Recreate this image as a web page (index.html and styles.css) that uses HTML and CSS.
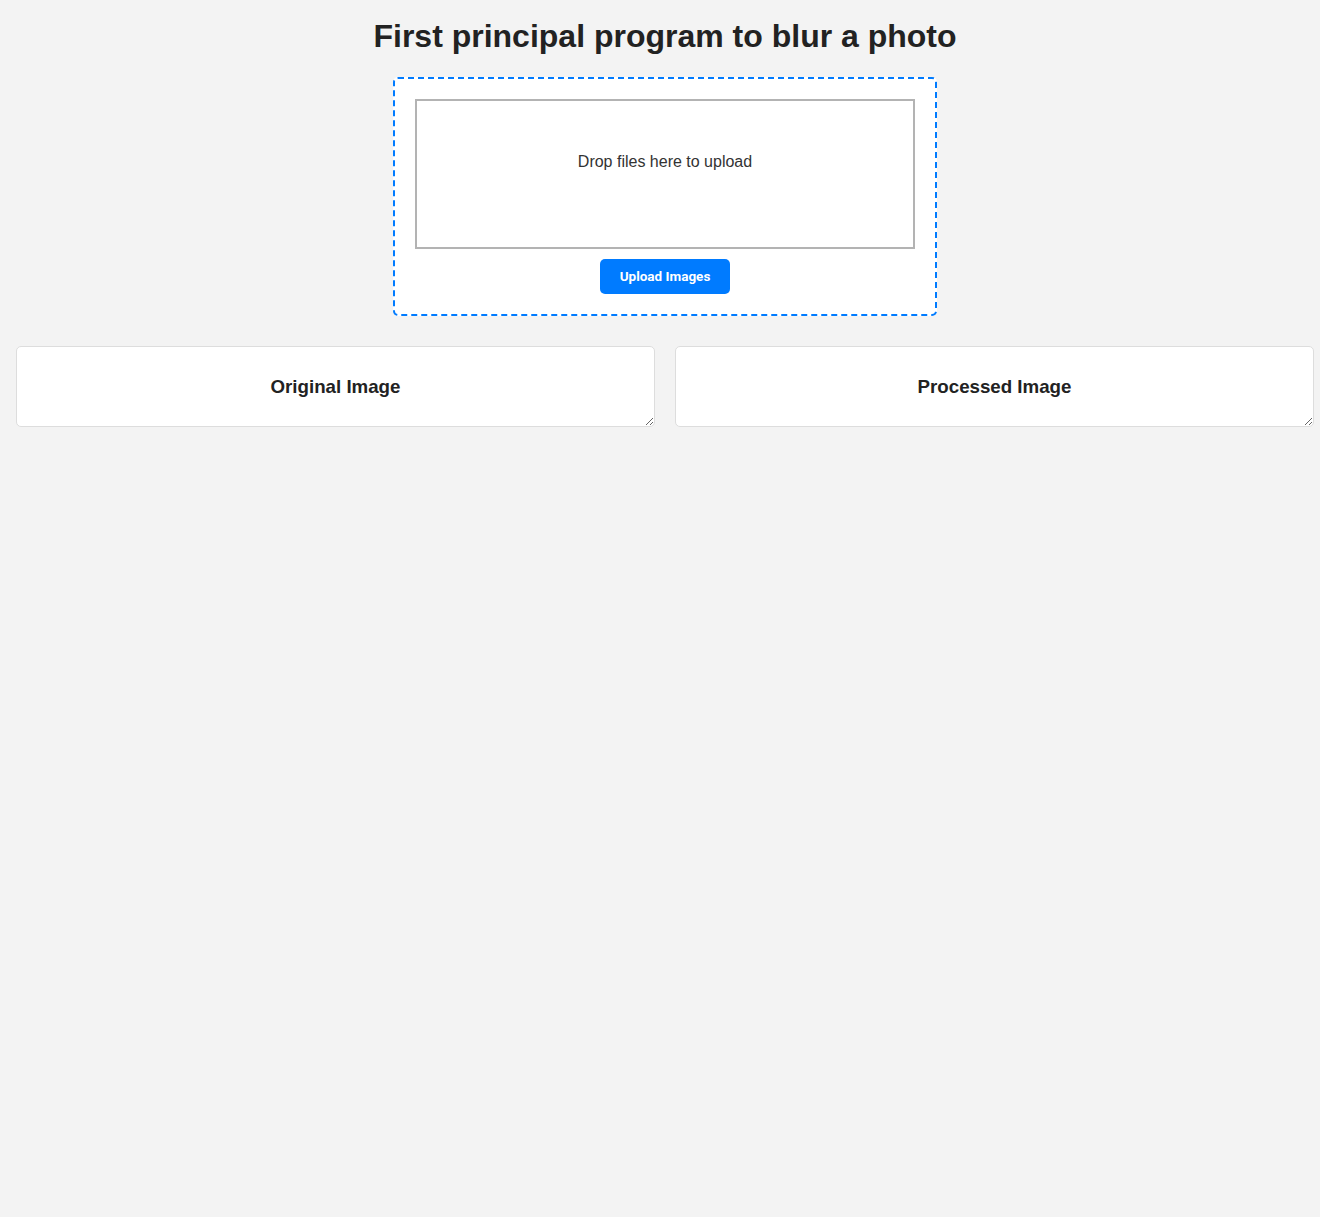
FILE: index.html
```html
<!DOCTYPE html>
<html lang="en">
<head>
<meta charset="utf-8">
<title>Blur a photo</title>
<link rel="stylesheet" href="styles.css">
</head>
<body>
<h1 class="title">First principal program to blur a photo</h1>
<div class="upload-wrap">
  <form class="upload-box">
    <div class="dropzone">
      <div class="dz-message">Drop files here to upload</div>
    </div>
    <button type="button" class="upload-btn">Upload Images</button>
  </form>
</div>
<div class="panels">
  <div class="panel"><h3 class="panel-title">Original Image</h3></div>
  <div class="panel"><h3 class="panel-title">Processed Image</h3></div>
</div>
</body>
</html>
```
FILE: styles.css
```css
html, body {
  margin: 0;
  padding: 0;
  background: #f3f3f3;
}
body {
  font-family: "Liberation Sans", Arial, sans-serif;
  color: #222;
  padding: 1px 6px 0 16px;
}
.title {
  margin: 17px 0 22px;
  font-size: 32px;
  font-weight: bold;
  text-align: center;
  line-height: 37px;
  color: #222;
}
.upload-wrap {
  display: flex;
  justify-content: center;
}
.upload-box {
  width: 500px;
  padding: 20px;
  background: #fff;
  border: 2px dashed #007bff;
  border-radius: 5px;
  display: flex;
  flex-direction: column;
  align-items: center;
  margin: 0;
}
.dropzone {
  box-sizing: border-box;
  width: 500px;
  height: 150px;
  border: 2px solid #b3b3b3;
  background: #fff;
  padding-top: 52px;
  text-align: center;
}
.dz-message {
  font-size: 16px;
  line-height: 18px;
  color: #333;
}
.upload-btn {
  margin-top: 10px;
  width: 130px;
  height: 35px;
  border: none;
  border-radius: 5px;
  background: #007bff;
  color: #fff;
  font-family: Roboto, "Liberation Sans", sans-serif;
  font-weight: 700;
  font-size: 13.5px;
  padding: 0 0 1px;
}
.panels {
  display: flex;
  gap: 20px;
  margin: 30px 0 0;
}
.panel {
  box-sizing: border-box;
  flex: 1 1 0;
  height: 81px;
  background: #fff;
  border: 1px solid #ddd;
  border-radius: 5px;
  resize: both;
  overflow: auto;
  text-align: center;
}
.panel-title {
  margin: 29px 0 0;
  font-size: 18.72px;
  line-height: 22px;
  font-weight: bold;
  color: #222;
}
```
